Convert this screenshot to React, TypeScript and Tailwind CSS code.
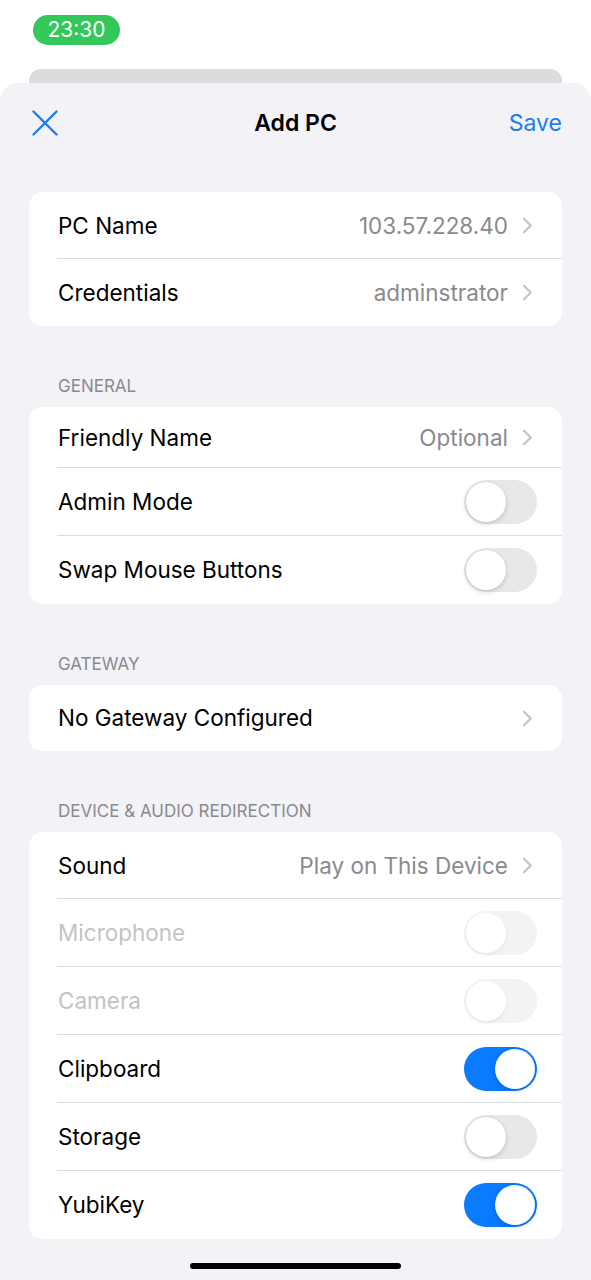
type Row =
  | { kind: "link"; label: string; value?: string; h: string }
  | { kind: "toggle"; label: string; on?: boolean; disabled?: boolean; h: string }

const groups: { title?: string; rows: Row[] }[] = [
  {
    rows: [
      { kind: "link", label: "PC Name", value: "103.57.228.40", h: "h-[67px]" },
      { kind: "link", label: "Credentials", value: "adminstrator", h: "h-[67px]" },
    ],
  },
  {
    title: "GENERAL",
    rows: [
      { kind: "link", label: "Friendly Name", value: "Optional", h: "h-[61px]" },
      { kind: "toggle", label: "Admin Mode", h: "h-[68px]" },
      { kind: "toggle", label: "Swap Mouse Buttons", h: "h-[68px]" },
    ],
  },
  {
    title: "GATEWAY",
    rows: [{ kind: "link", label: "No Gateway Configured", h: "h-[66px]" }],
  },
  {
    title: "DEVICE & AUDIO REDIRECTION",
    rows: [
      { kind: "link", label: "Sound", value: "Play on This Device", h: "h-[67px]" },
      { kind: "toggle", label: "Microphone", disabled: true, h: "h-[68px]" },
      { kind: "toggle", label: "Camera", disabled: true, h: "h-[68px]" },
      { kind: "toggle", label: "Clipboard", on: true, h: "h-[68px]" },
      { kind: "toggle", label: "Storage", h: "h-[68px]" },
      { kind: "toggle", label: "YubiKey", on: true, h: "h-[68px]" },
    ],
  },
]

function Chevron() {
  return (
    <svg width="11" height="17" viewBox="0 0 11 17" fill="none" className="text-[#c4c4c7]">
      <path d="M2 1.8 L8.8 8.5 L2 15.2" stroke="currentColor" strokeWidth="2.3" strokeLinecap="round" strokeLinejoin="round" />
    </svg>
  )
}

function Toggle({ on, disabled }: { on?: boolean; disabled?: boolean }) {
  const track = on ? "bg-[#0a7aff] justify-end" : disabled ? "bg-[#f3f3f5] justify-start" : "bg-[#e8e8ea] justify-start"
  const knob = disabled
    ? "shadow-[0_2px_4px_rgba(0,0,0,0.06)]"
    : "shadow-[0_2px_5px_rgba(0,0,0,0.16),0_0_1px_rgba(0,0,0,0.12)]"
  return (
    <div className={`flex h-[44px] w-[73px] items-center rounded-full p-[2px] ${track}`}>
      <div className={`h-[40px] w-[40px] rounded-full bg-white ${knob}`} />
    </div>
  )
}

function SettingRow({ row, last }: { row: Row; last: boolean }) {
  const labelColor = row.kind === "toggle" && row.disabled ? "text-[#c3c3c6]" : "text-black"
  return (
    <div className={`relative flex items-center pl-[29px] ${row.h}`}>
      <span className={`flex-1 text-[22.5px] ${labelColor}`}>{row.label}</span>
      {row.kind === "link" ? (
        <div className="flex items-center gap-[14px] pr-[29px]">
          {row.value && <span className="text-[22.5px] text-[#8a8a8e]">{row.value}</span>}
          <Chevron />
        </div>
      ) : (
        <div className="pr-[25px]">
          <Toggle on={row.on} disabled={row.disabled} />
        </div>
      )}
      {!last && <div className="absolute bottom-0 left-[28px] right-0 h-px bg-[#dcdce0]" />}
    </div>
  )
}

export default function App() {
  return (
    <div
      className="flex min-h-[1280px] w-full flex-col bg-white"
      style={{ fontFamily: "Inter, 'Noto Sans', sans-serif" }}
    >
      {/* status bar */}
      <div className="h-[69px] px-[33px] pt-[15px]">
        <div className="flex h-[30px] w-[87px] items-center justify-center rounded-full bg-[#34c759] text-[21px] text-white">
          23:30
        </div>
      </div>

      <div className="mx-[29px] h-[14px] rounded-t-[12px] bg-[#dcdcdc]" />

      {/* sheet */}
      <div className="flex flex-1 flex-col rounded-t-[18px] bg-[#f2f2f7] px-[29px]">
        <div className="relative flex h-[80px] items-center justify-center">
          <svg width="26" height="26" viewBox="0 0 26 26" fill="none" className="absolute left-[3px] text-[#1a7ef0]">
            <path d="M1.5 1.5 L24.5 24.5 M24.5 1.5 L1.5 24.5" stroke="currentColor" strokeWidth="2.4" strokeLinecap="round" />
          </svg>
          <span className="text-[23px] font-semibold text-black">Add PC</span>
          <span className="absolute right-0 text-[23px] text-[#1a7ef0]">Save</span>
        </div>

        <div className="h-[29px]" />

        {groups.map((g, gi) => (
          <div key={gi}>
            {g.title && (
              <div className="flex h-[81px] items-end pb-[8px] pl-[29px] text-[17px] text-[#8a8a8e]">
                {g.title}
              </div>
            )}
            <div className="overflow-hidden rounded-[14px] bg-white">
              {g.rows.map((r, ri) => (
                <SettingRow key={r.label} row={r} last={ri === g.rows.length - 1} />
              ))}
            </div>
          </div>
        ))}

        <div className="mt-[24px] flex justify-center">
          <div className="h-[6px] w-[211px] rounded-full bg-black" />
        </div>
      </div>
    </div>
  )
}
